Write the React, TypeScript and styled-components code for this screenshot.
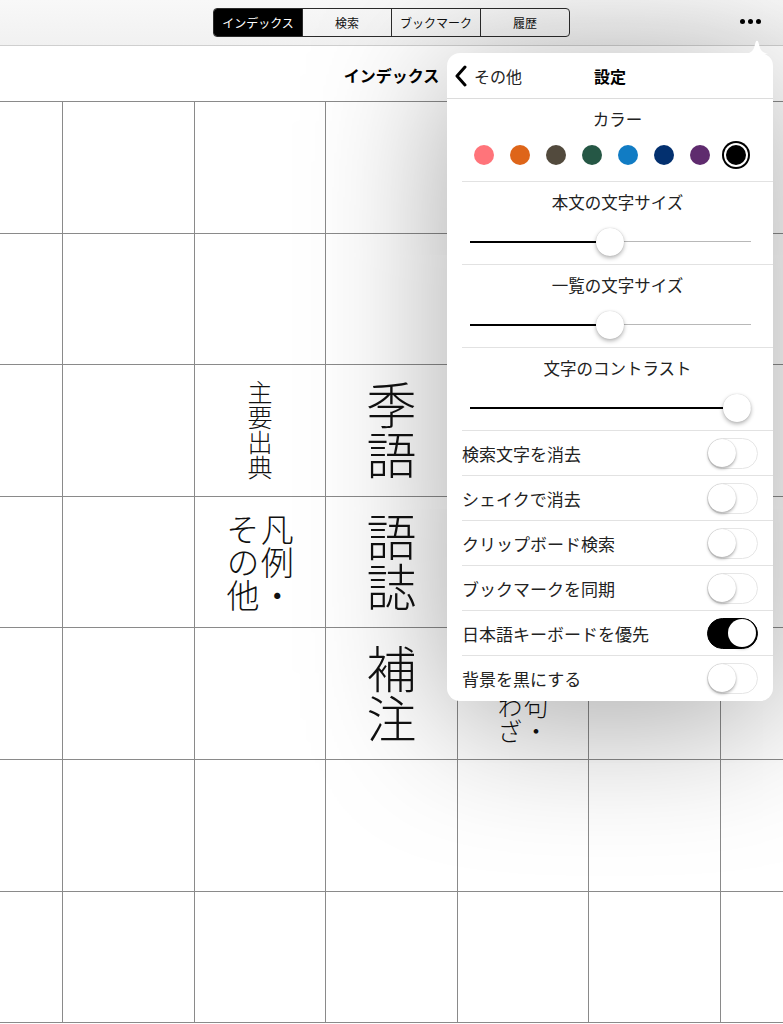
import React from "react";
import styled, { createGlobalStyle } from "styled-components";

const GlobalStyle = createGlobalStyle`
  html, body {
    margin: 0;
    padding: 0;
    background: #ffffff;
  }
  body {
    font-family: "Noto Sans CJK JP", "Noto Sans", sans-serif;
    color: #000;
  }
`;

interface ICell {
  text?: string;
  size?: number;
}

const TABS = ["インデックス", "検索", "ブックマーク", "履歴"];
const COLORS = ["#ff747a", "#de6519", "#524a3d", "#255745", "#117cc4", "#03306f", "#5f2b6e", "#000000"];
const TOGGLES: Array<{ label: string; on: boolean }> = [
  { label: "検索文字を消去", on: false },
  { label: "シェイクで消去", on: false },
  { label: "クリップボード検索", on: false },
  { label: "ブックマークを同期", on: false },
  { label: "日本語キーボードを優先", on: true },
  { label: "背景を黒にする", on: false },
];
const SLIDERS = [
  { label: "本文の文字サイズ", value: 0.5 },
  { label: "一覧の文字サイズ", value: 0.5 },
  { label: "文字のコントラスト", value: 1 },
];

const cellAt = (r: number, c: number): ICell => {
  const key = `${r}-${c}`;
  const map: Record<string, ICell> = {
    "2-2": { text: "主要出典", size: 25 },
    "2-3": { text: "季語", size: 50 },
    "3-2": { text: "凡例・\nその他", size: 33 },
    "3-3": { text: "語誌", size: 50 },
    "4-3": { text: "補注", size: 50 },
    "4-4": { text: "慣用句・\nことわざ", size: 25 },
  };
  return map[key] || {};
};

const App = () => {
  const rows = Array.from({ length: 7 }, (_, r) => r);
  const cols = Array.from({ length: 7 }, (_, c) => c);
  return (
    <Page>
      <GlobalStyle />
      <TopBar>
        <Segmented>
          {TABS.map((t, i) => (
            <Segment key={t} $active={i === 0}>
              {t}
            </Segment>
          ))}
        </Segmented>
        <MoreDots>
          <i />
          <i />
          <i />
        </MoreDots>
      </TopBar>
      <TitleBar>インデックス</TitleBar>
      <Grid>
        {rows.map((r) =>
          cols.map((c) => {
            const cell = cellAt(r, c);
            return (
              <Cell key={`${r}-${c}`}>
                {cell.text && <VText $size={cell.size || 24}>{cell.text}</VText>}
              </Cell>
            );
          })
        )}
      </Grid>

      <Arrow width="28" height="14" viewBox="0 0 28 14">
        <path d="M0 14 C6 14 9 12 11 8 L12.6 2.2 C13.2 0.4 14.8 0.4 15.4 2.2 L17 8 C19 12 22 14 28 14 Z" fill="#ffffff" />
      </Arrow>
      <Popover>
        <PopHeader>
          <BackButton>
            <svg width="14" height="22" viewBox="0 0 14 22">
              <path d="M11 2 L3 11 L11 20" fill="none" stroke="#000" strokeWidth="3" strokeLinecap="round" strokeLinejoin="round" />
            </svg>
            その他
          </BackButton>
          <PopTitle>設定</PopTitle>
        </PopHeader>
        <Section>
          <SectionLabel>カラー</SectionLabel>
          <DotRow>
            {COLORS.map((c, i) => (
              <Dot key={c} $color={c} $selected={i === COLORS.length - 1} />
            ))}
          </DotRow>
        </Section>
        {SLIDERS.map((s) => (
          <Section key={s.label}>
            <SectionLabel>{s.label}</SectionLabel>
            <Slider>
              <TrackFill style={{ width: `${s.value * 100}%` }} />
              <Thumb style={{ left: `calc(${s.value * 100}% - ${s.value * 28}px)` }} />
            </Slider>
          </Section>
        ))}
        {TOGGLES.map((t) => (
          <ToggleRow key={t.label}>
            <span>{t.label}</span>
            <Switch $on={t.on}>
              <Knob $on={t.on} />
            </Switch>
          </ToggleRow>
        ))}
      </Popover>
    </Page>
  );
};

export default App;

const Page = styled.div`
  position: relative;
  width: 783px;
  height: 1024px;
  overflow: hidden;
  background: #ffffff;
`;

const TopBar = styled.div`
  position: relative;
  height: 45px;
  display: flex;
  align-items: center;
  justify-content: center;
  background: linear-gradient(#f8f8f8, #f1f1f1);
  border-bottom: 1px solid #cfcfcf;
`;

const Segmented = styled.div`
  display: flex;
  width: 357px;
  height: 29px;
  margin-top: -1px;
  border: 1px solid #2b2b2b;
  border-radius: 4px;
  overflow: hidden;
  box-sizing: border-box;
`;

const Segment = styled.div<{ $active: boolean }>`
  flex: 1;
  display: flex;
  align-items: center;
  justify-content: center;
  font-size: 12px;
  color: ${(p) => (p.$active ? "#ffffff" : "#111111")};
  background: ${(p) => (p.$active ? "#000000" : "transparent")};
  & + & {
    border-left: 1px solid #2b2b2b;
  }
`;

const MoreDots = styled.div`
  position: absolute;
  right: 22px;
  top: 19px;
  display: flex;
  gap: 3px;
  i {
    width: 5px;
    height: 5px;
    border-radius: 50%;
    background: #000;
  }
`;

const TitleBar = styled.div`
  height: 55px;
  display: flex;
  align-items: center;
  justify-content: center;
  font-size: 16px;
  font-weight: 700;
  padding-top: 2px;
  box-sizing: border-box;
`;

const Grid = styled.div`
  display: grid;
  grid-template-columns: 63px repeat(6, 131.6px);
  grid-auto-rows: 131.6px;
  border-top: 1px solid #8a8a8a;
  width: 900px;
`;

const Cell = styled.div`
  box-sizing: border-box;
  border-right: 1px solid #8a8a8a;
  border-bottom: 1px solid #8a8a8a;
  display: flex;
  align-items: center;
  justify-content: center;
`;

const VText = styled.div<{ $size: number }>`
  writing-mode: vertical-rl;
  white-space: pre;
  font-size: ${(p) => p.$size}px;
  line-height: 1.04;
  color: #111;
  font-family: "Noto Sans CJK JP", sans-serif;
  font-weight: 300;
`;

const Arrow = styled.svg`
  position: absolute;
  left: 743px;
  top: 40px;
  z-index: 3;
`;

const Popover = styled.div`
  position: absolute;
  left: 447px;
  top: 53px;
  width: 326px;
  height: 648px;
  background: #ffffff;
  border-radius: 13px;
  box-shadow: 0 20px 140px rgba(0, 0, 0, 0.36);
  z-index: 2;
  display: flex;
  flex-direction: column;
  font-size: 17px;
`;

const PopHeader = styled.div`
  position: relative;
  height: 45px;
  flex-shrink: 0;
  display: flex;
  align-items: center;
  justify-content: center;
  border-bottom: 1px solid #dcdcdc;
`;

const BackButton = styled.div`
  position: absolute;
  left: 7px;
  top: 0;
  height: 100%;
  display: flex;
  align-items: center;
  gap: 6px;
  font-size: 16px;
  color: #222;
  svg {
    display: block;
  }
`;

const PopTitle = styled.div`
  font-size: 16px;
  font-weight: 700;
`;

const Section = styled.div`
  margin-left: 15px;
  padding-right: 15px;
  height: 83px;
  flex-shrink: 0;
  box-sizing: border-box;
  border-bottom: 1px solid #e2e2e2;
  display: flex;
  flex-direction: column;
  align-items: center;
`;

const SectionLabel = styled.div`
  margin-top: 7px;
  height: 26px;
  line-height: 26px;
  font-size: 16.5px;
  color: #222;
  margin-right: -15px;
`;

const DotRow = styled.div`
  margin-top: 13px;
  display: flex;
  align-items: center;
  gap: 16px;
`;

const Dot = styled.div<{ $color: string; $selected: boolean }>`
  width: 20px;
  height: 20px;
  border-radius: 50%;
  background: ${(p) => p.$color};
  box-shadow: ${(p) => (p.$selected ? "0 0 0 2px #ffffff, 0 0 0 4px #000000" : "none")};
`;

const Slider = styled.div`
  position: relative;
  margin-top: 13px;
  width: 281px;
  height: 28px;
  &::before {
    content: "";
    position: absolute;
    left: 0;
    right: 0;
    top: 13px;
    height: 1px;
    background: #b8b8b8;
  }
`;

const TrackFill = styled.div`
  position: absolute;
  left: 0;
  top: 13px;
  height: 2px;
  background: #000;
`;

const Thumb = styled.div`
  position: absolute;
  top: 0;
  width: 28px;
  height: 28px;
  border-radius: 50%;
  background: #fff;
  box-shadow: 0 2px 4px rgba(0, 0, 0, 0.3), 0 0 1px rgba(0, 0, 0, 0.2);
`;

const ToggleRow = styled.div`
  margin-left: 15px;
  padding-right: 15px;
  height: 45px;
  flex-shrink: 0;
  box-sizing: border-box;
  display: flex;
  align-items: center;
  justify-content: space-between;
  border-bottom: 1px solid #e2e2e2;
  font-size: 17px;
  color: #222;
  &:last-child {
    border-bottom: none;
  }
`;

const Switch = styled.div<{ $on: boolean }>`
  position: relative;
  width: 51px;
  height: 31px;
  border-radius: 16px;
  box-sizing: border-box;
  background: ${(p) => (p.$on ? "#000" : "#fff")};
  border: 1.5px solid ${(p) => (p.$on ? "#000" : "#e6e6e6")};
`;

const Knob = styled.div<{ $on: boolean }>`
  position: absolute;
  top: 0;
  left: ${(p) => (p.$on ? "20px" : "0")};
  width: 28px;
  height: 28px;
  border-radius: 50%;
  background: #fff;
  box-shadow: 0 2px 3px rgba(0, 0, 0, 0.28), 0 0 1px rgba(0, 0, 0, 0.25);
`;
